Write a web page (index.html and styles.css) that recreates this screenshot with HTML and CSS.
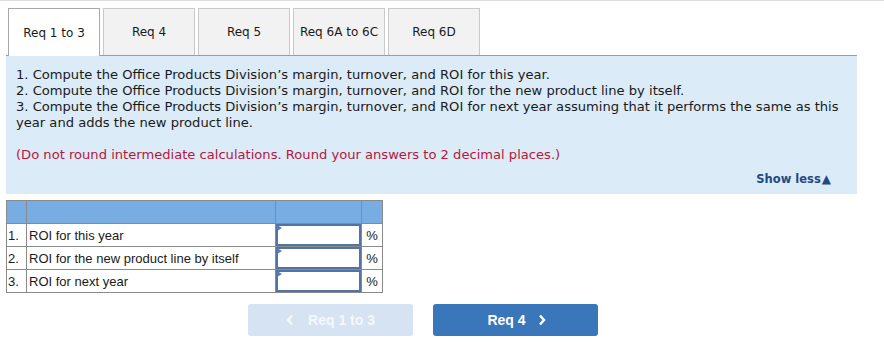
FILE: index.html
```html
<!DOCTYPE html>
<html lang="en">
<head>
  <meta charset="UTF-8" />
  <title>Req 1 to 3</title>
  <link rel="stylesheet" href="styles.css">
</head>
<body>

  <div class="top-rule"></div>

  <!-- Tabs -->
  <div class="tabs">
    <div class="tab active">Req 1 to 3</div>
    <div class="tab">Req 4</div>
    <div class="tab">Req 5</div>
    <div class="tab">Req 6A to 6C</div>
    <div class="tab">Req 6D</div>
  </div>

  <!-- Instructions -->
  <div class="panel">
    <p class="task">1. Compute the Office Products Division’s margin, turnover, and ROI for this year.<br>
    2. Compute the Office Products Division’s margin, turnover, and ROI for the new product line by itself.<br>
    3. Compute the Office Products Division’s margin, turnover, and ROI for next year assuming that it performs the same as this year and adds the new product line.</p>
    <p class="note">(Do not round intermediate calculations. Round your answers to 2 decimal places.)</p>
    <div class="show-less">Show less<span class="arrow">▲</span></div>
  </div>

  <!-- Answer table -->
  <table class="answers">
    <tr class="head">
      <td class="num"></td>
      <td class="label"></td>
      <td class="field"></td>
      <td class="unit"></td>
    </tr>
    <tr>
      <td class="num">1.</td>
      <td class="label">ROI for this year</td>
      <td class="field"><div class="input"></div></td>
      <td class="unit">%</td>
    </tr>
    <tr>
      <td class="num">2.</td>
      <td class="label">ROI for the new product line by itself</td>
      <td class="field"><div class="input"></div></td>
      <td class="unit">%</td>
    </tr>
    <tr>
      <td class="num">3.</td>
      <td class="label">ROI for next year</td>
      <td class="field"><div class="input"></div></td>
      <td class="unit">%</td>
    </tr>
  </table>

  <!-- Nav buttons -->
  <div class="nav">
    <button class="nav-btn prev">
      <svg width="8" height="12" viewBox="0 0 8 12"><polyline points="6,1.5 2,6 6,10.5" fill="none" stroke="currentColor" stroke-width="2.4"/></svg>
      <span>Req 1 to 3</span>
    </button>
    <button class="nav-btn next">
      <span>Req 4</span>
      <svg width="8" height="12" viewBox="0 0 8 12"><polyline points="2,1.5 6,6 2,10.5" fill="none" stroke="currentColor" stroke-width="2.4"/></svg>
    </button>
  </div>

</body>
</html>
```

FILE: styles.css
```css
body {
  margin: 0;
  font-family: 'DejaVu Sans', Verdana, sans-serif;
  color: #1a1a1a;
  background: #fff;
}

.top-rule {
  height: 1px;
  background: #dcdcdc;
}

.tabs {
  display: flex;
  align-items: flex-start;
  gap: 3px;
  margin: 7px 27px 0 6px;
  padding-left: 2px;
  height: 47px;
  border-bottom: 1px solid #9c9c9c;
}

.tab {
  box-sizing: border-box;
  width: 92px;
  height: 47px;
  border: 1px solid #c9c9c9;
  border-bottom: none;
  background: #f2f2f2;
  font-size: 12px;
  display: flex;
  align-items: center;
  justify-content: center;
  color: #1a1a1a;
}

.tab.active {
  height: 48px;
  background: #fff;
  border-color: #a8a8a8;
}

.panel {
  margin: 0 27px 0 6px;
  background: #dbebf8;
  padding: 11px 10px 7px 10px;
  font-size: 13.1px;
  line-height: 16px;
}

.panel p {
  margin: 0;
}

.note {
  margin-top: 16px !important;
  color: #b8173c;
}

.show-less {
  margin-top: 8px;
  height: 16px;
  text-align: right;
  padding-right: 16px;
  font-size: 11.5px;
  font-weight: bold;
  color: #1f4a82;
}

.show-less .arrow {
  font-size: 12px;
  margin-left: 1px;
}

.answers {
  margin: 6px 0 0 6px;
  border-collapse: collapse;
  font-family: 'Liberation Sans', Arial, sans-serif;
  font-size: 13px;
}

.answers td {
  border: 1px solid #8a8a8a;
  height: 22px;
  padding: 0;
}

.answers .head td {
  background: #78ade3;
}

.answers .num {
  width: 18px;
  padding-left: 1px;
}

.answers .label {
  width: 246px;
  padding-left: 2px;
}

.answers .field {
  width: 85px;
}

.answers .unit {
  width: 20px;
  text-align: center;
}

.input {
  position: relative;
  box-sizing: border-box;
  height: 22px;
  border: 2px solid #5273a3;
  background: #fff;
}

.input::before {
  content: "";
  position: absolute;
  left: -1px;
  top: -1px;
  border-top: 3px solid transparent;
  border-bottom: 3px solid transparent;
  border-left: 5px solid #4a7fc2;
}

.nav {
  display: flex;
  gap: 20px;
  margin-top: 11px;
  padding-left: 248px;
}

.nav-btn {
  width: 165px;
  height: 32px;
  border: none;
  border-radius: 3px;
  display: flex;
  align-items: center;
  justify-content: center;
  gap: 14px;
  font-family: 'Liberation Sans', Arial, sans-serif;
  font-size: 14px;
  font-weight: bold;
  color: #fff;
}

.nav-btn.prev {
  background: #d6e3f3;
  color: #f4f8fc;
}

.nav-btn.next {
  background: #3a76ba;
  padding-left: 8px;
  gap: 12px;
}
```
